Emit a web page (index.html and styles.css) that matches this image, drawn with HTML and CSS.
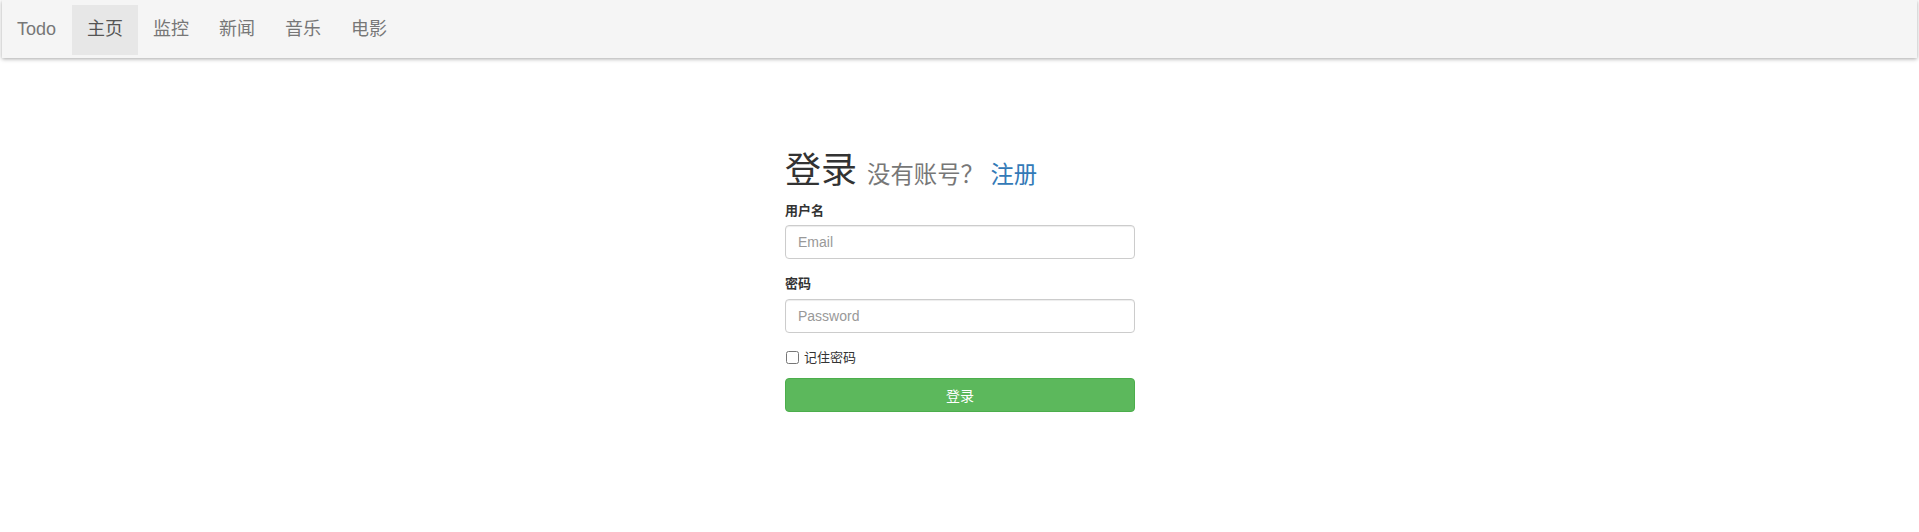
FILE: index.html
```html
<!DOCTYPE html>
<html lang="zh-CN">
<head>
<meta charset="utf-8">
<title>Todo</title>
<link rel="stylesheet" href="styles.css">
</head>
<body>
<nav class="navbar">
  <a class="brand" href="#">Todo</a>
  <ul class="nav">
    <li class="active"><a href="#">主页</a></li>
    <li><a href="#">监控</a></li>
    <li><a href="#">新闻</a></li>
    <li><a href="#">音乐</a></li>
    <li><a href="#">电影</a></li>
  </ul>
</nav>
<main class="page">
  <form class="login">
    <h1 class="title">登录 <small>没有账号？ <a href="#">注册</a></small></h1>
    <div class="form-group">
      <label class="label" for="u">用户名</label>
      <input class="input" id="u" type="text" placeholder="Email">
    </div>
    <div class="form-group">
      <label class="label" for="p">密码</label>
      <input class="input" id="p" type="password" placeholder="Password">
    </div>
    <div class="checkbox">
      <label><input type="checkbox"> 记住密码</label>
    </div>
    <button class="btn" type="button">登录</button>
  </form>
</main>
</body>
</html>
```
FILE: styles.css
```css
* { box-sizing: border-box; }
html, body { margin: 0; padding: 0; }
body {
  font-family: "Liberation Sans", Arial, "Noto Sans CJK SC", sans-serif;
  font-size: 14px;
  line-height: 1.42857;
  color: #333;
  background: #fff;
}
a { text-decoration: none; }

.navbar {
  display: flex;
  align-items: flex-start;
  height: 58px;
  margin: 0 2px;
  padding-top: 5px;
  background: #f5f5f5;
  box-shadow: 0 1px 4px rgba(0,0,0,0.35);
}
.brand {
  display: block;
  height: 50px;
  padding: 14px 16px 0 15px;
  font-size: 18px;
  line-height: 20px;
  color: #777;
}
.nav {
  display: flex;
  list-style: none;
  margin: 0;
  padding: 0;
}
.nav a {
  display: block;
  height: 50px;
  padding: 14px 15px 0;
  font-size: 18px;
  line-height: 20px;
  color: #777;
}
.nav .active a {
  background: #e7e7e7;
  color: #555;
}

.page {
  display: flex;
  justify-content: center;
  padding-top: 93px;
}
.login {
  width: 350px;
  margin-left: 1px;
}
.title {
  margin: 0 0 10px;
  font-size: 36px;
  font-weight: 400;
  line-height: 1.1;
  color: #333;
}
.title small {
  font-size: 65%;
  font-weight: 400;
  color: #777;
}
.title small a { color: #337ab7; }

.form-group { margin-bottom: 15px; }
.label {
  display: inline-block;
  margin-bottom: 5px;
  font-weight: bold;
  font-size: 13px;
  color: #333;
}
.input {
  display: block;
  width: 100%;
  height: 34px;
  padding: 6px 12px;
  font-family: inherit;
  font-size: 14px;
  color: #555;
  background: #fff;
  border: 1px solid #ccc;
  border-radius: 4px;
  box-shadow: inset 0 1px 1px rgba(0,0,0,0.075);
}
.input::placeholder { color: #999; }

.checkbox {
  margin: 0 0 10px;
  min-height: 20px;
}
.checkbox label {
  display: flex;
  align-items: center;
  gap: 5px;
  font-size: 13px;
  line-height: 20px;
}
.checkbox input {
  width: 13px;
  height: 13px;
  margin: 0 0 0 1px;
  accent-color: #999;
}

.btn {
  display: block;
  width: 100%;
  height: 34px;
  padding: 6px 12px;
  font-family: inherit;
  font-size: 14px;
  color: #fff;
  background: #5cb85c;
  border: 1px solid #4cae4c;
  border-radius: 4px;
  cursor: pointer;
}
```
